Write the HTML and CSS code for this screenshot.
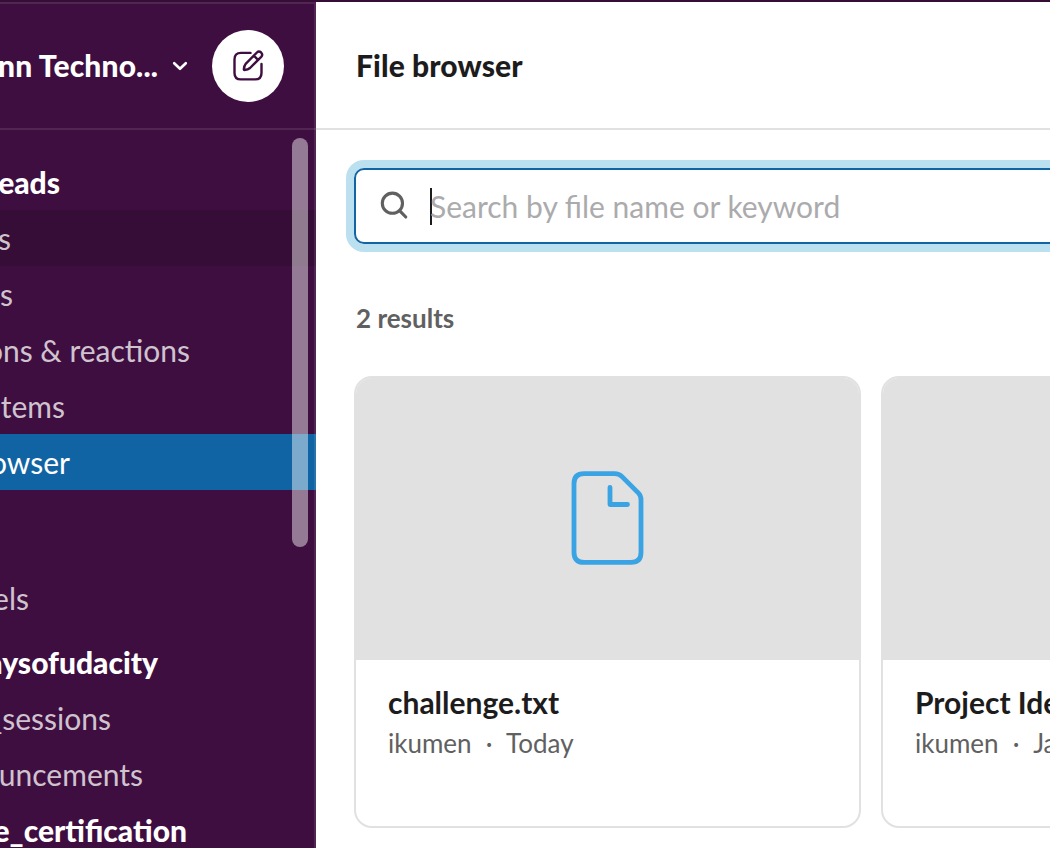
FILE: index.html
```html
<!DOCTYPE html>
<html lang="en">
<head>
<meta charset="utf-8">
<title>File browser</title>
<link rel="stylesheet" href="styles.css">
</head>
<body>
<div class="app">
  <aside class="sidebar">
    <header class="team">
      <span class="team-name">nn Techno...</span>
      <svg class="chevron" width="16" height="12" viewBox="0 0 16 12"><path d="M2.2 3.2 8 8.8 13.8 3.2"/></svg>
      <button class="compose" aria-label="Compose">
        <svg width="36" height="36" viewBox="0 0 36 36"><path d="M20.500 4.900H11Q4.500 4.900 4.500 11.400V24.900Q4.500 31.400 11 31.400H25Q31.500 31.400 31.500 24.900V16"/><path d="M26.900 4.500Q28.900 2.600 31.100 4.500Q33.200 6.700 31.200 8.800L20 20Q18 21.800 14.500 22Q13.800 22 13.800 21.300Q14.200 17.700 15.900 15.600ZM23.800 7.700 28 11.900"/></svg>
      </button>
    </header>
    <nav class="nav">
      <div class="row unread threads"><span>eads</span></div>
      <div class="row hovered dms"><span>s</span></div>
      <div class="row drafts"><span>s</span></div>
      <div class="row mentions"><span>ons &amp; reactions</span></div>
      <div class="row saved"><span>tems</span></div>
      <div class="row selected files"><span>owser</span></div>
      <div class="row heading"><span>els</span></div>
      <div class="row unread days"><span>aysofudacity</span></div>
      <div class="row sessions"><span>_sessions</span></div>
      <div class="row announcements"><span>uncements</span></div>
      <div class="row unread certification"><span>e_certification</span></div>
    </nav>
    <div class="scrollbar"></div>
    <div class="divider"></div>
  </aside>
  <main class="main">
    <header class="title"><h1>File browser</h1></header>
    <section class="content">
      <div class="search">
        <svg width="32" height="32" viewBox="0 0 32 32"><circle cx="14.400" cy="13.200" r="10.100"/><path d="m21.800 20.800 6 6.200"/></svg>
        <i class="caret"></i><span>Search by file name or keyword</span>
      </div>
      <p class="results">2 results</p>
      <div class="cards">
        <article class="card">
          <div class="preview">
            <svg width="76" height="98" viewBox="0 0 76 98"><path d="M14 4.600H44.500Q49 4.600 52 7.600L68.500 24.100Q71 26.600 71 31V83.500Q71 93.400 61 93.400H14Q4 93.400 4 83.500V14.500Q4 4.600 14 4.600Z"/><path d="M40 18.500V35.500H57.500"/></svg>
          </div>
          <div class="info"><h2>challenge.txt</h2><p>ikumen <span class="dot">·</span> Today</p></div>
        </article>
        <article class="card">
          <div class="preview"></div>
          <div class="info"><h2>Project Ide</h2><p>ikumen <span class="dot">·</span> Ja</p></div>
        </article>
      </div>
    </section>
  </main>
</div>
</body>
</html>
```

FILE: styles.css
```css
* { box-sizing: border-box; }
body { margin: 0; font-family: Lato, "Liberation Sans", sans-serif; color: #1d1c1d; background: #fff; overflow: hidden; }
h1, h2, p { margin: 0; }
.app { display: flex; width: 1050px; height: 848px; border-top: 2px solid #350d36; overflow: hidden; }
.sidebar { position: relative; flex: none; width: 316px; height: 846px; overflow: hidden; background: #3f0e40; border-top: 2px solid #522653; }
.team { display: flex; align-items: center; justify-content: flex-end; height: 126px; padding: 0 32px 0 0; border-bottom: 2px solid #522653; color: #fff; }
.team-name { flex: none; padding-bottom: 2px; font-size: 30px; font-weight: 900; line-height: 44px; letter-spacing: .15px; white-space: nowrap; }
.chevron { margin: 0 24px 0 14px; }
svg { display: block; flex: none; fill: none; stroke-linecap: round; stroke-linejoin: round; }
.chevron path { stroke: #fff; stroke-width: 2.6; }
.compose { display: flex; flex: none; align-items: center; justify-content: center; width: 72px; height: 72px; padding: 0; border: 0; border-radius: 50%; background: #fff; }
.compose path { stroke: #3f0e40; stroke-width: 2.4; }
.nav { padding-top: 24px; }
.row { display: flex; align-items: center; justify-content: flex-end; width: 316px; height: 56px; font-size: 30px; color: #cfc3cf; white-space: nowrap; }
.unread { font-weight: 900; color: #fff; }
.hovered { background: #350d36; }
.selected { background: #1164a3; color: #fff; }
.heading { margin: 80px 0 8px; }
.threads { padding-right: 256px; }
.dms { padding-right: 305px; }
.drafts { padding-right: 303px; }
.mentions { padding-right: 126px; }
.saved { padding-right: 251px; }
.files { padding-right: 246px; }
.heading { padding-right: 287px; }
.days { padding-right: 158px; }
.sessions { padding-right: 205px; }
.announcements { padding-right: 173px; }
.certification { padding-right: 129px; }
.scrollbar { position: absolute; top: 134px; right: 8px; width: 16px; height: 409px; border-radius: 8px; background: rgba(255, 255, 255, .45); }
.divider { position: absolute; top: 0; right: 0; width: 2px; height: 100%; background: rgba(255, 255, 255, .1); }
.main { flex: none; width: 734px; overflow: hidden; }
.title { display: flex; align-items: center; height: 128px; padding-left: 40px; border-bottom: 2px solid #e1e1e1; }
.title h1 { font-size: 30px; font-weight: 900; line-height: 44px; letter-spacing: .1px; }
.content { padding: 38px 0 0 38px; }
.search { display: flex; align-items: center; width: 980px; height: 76px; padding-left: 22px; border: 2px solid #1264a3; border-radius: 10px; box-shadow: 0 0 0 8px #bbe0ef; font-size: 30px; color: #ababad; }
.search svg { stroke: #616061; stroke-width: 3.1; }
.caret { width: 2px; height: 37px; margin-left: 20px; background: #1d1c1d; }
.search span { margin-left: -2px; }
.results { height: 40px; margin: 54px 0 38px 2px; font-size: 26px; font-weight: 700; line-height: 40px; color: #616061; }
.cards { display: flex; gap: 20px; width: 1100px; }
.card { flex: none; width: 507px; height: 452px; border: 2px solid #e1e1e1; border-radius: 18px; overflow: hidden; }
.preview { display: flex; align-items: center; justify-content: center; height: 282px; padding-bottom: 2px; background: #e1e1e1; }
.preview path { stroke: #3aa3e3; stroke-width: 4.8; }
.info { padding: 20px 32px; }
.info h2 { font-size: 30px; font-weight: 700; line-height: 44px; }
.info p { font-size: 26px; line-height: 38px; color: #616061; }
.dot { display: inline-block; width: 22px; text-align: center; }
```
